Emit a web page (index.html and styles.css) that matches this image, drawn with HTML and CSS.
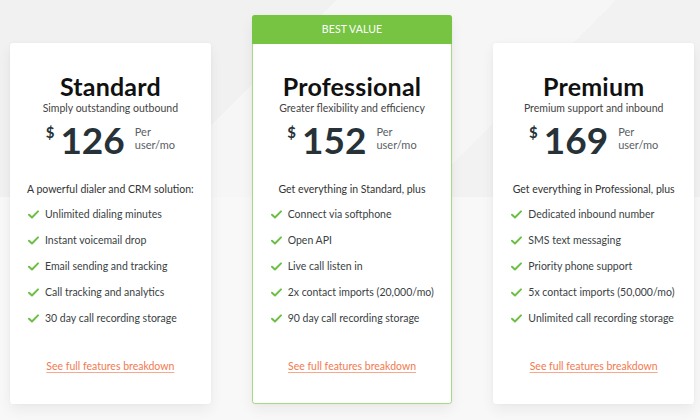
FILE: index.html
```html
<!DOCTYPE html>
<html>
<head>
<meta charset="utf-8">
<link rel="stylesheet" href="styles.css">
</head>
<body>
<div class="page">
  <div class="plans">
    <div class="card">
      <div class="body">
        <h2 class="name">Standard</h2>
        <p class="tag">Simply outstanding outbound</p>
        <div class="price"><span class="cur">$</span><span class="amt">126</span><span class="per">Per<br>user/mo</span></div>
        <p class="intro">A powerful dialer and CRM solution:</p>
        <ul class="feats">
          <li><svg viewBox="0 0 12 10"><path d="M1 5.2 4.3 8.3 11 1.5"/></svg>Unlimited dialing minutes</li>
          <li><svg viewBox="0 0 12 10"><path d="M1 5.2 4.3 8.3 11 1.5"/></svg>Instant voicemail drop</li>
          <li><svg viewBox="0 0 12 10"><path d="M1 5.2 4.3 8.3 11 1.5"/></svg>Email sending and tracking</li>
          <li><svg viewBox="0 0 12 10"><path d="M1 5.2 4.3 8.3 11 1.5"/></svg>Call tracking and analytics</li>
          <li><svg viewBox="0 0 12 10"><path d="M1 5.2 4.3 8.3 11 1.5"/></svg>30 day call recording storage</li>
        </ul>
        <a class="more" href="#">See full features breakdown</a>
      </div>
    </div>
    <div class="card best">
      <div class="badge">BEST VALUE</div>
      <div class="body">
        <h2 class="name">Professional</h2>
        <p class="tag">Greater flexibility and efficiency</p>
        <div class="price"><span class="cur">$</span><span class="amt">152</span><span class="per">Per<br>user/mo</span></div>
        <p class="intro">Get everything in Standard, plus</p>
        <ul class="feats">
          <li><svg viewBox="0 0 12 10"><path d="M1 5.2 4.3 8.3 11 1.5"/></svg>Connect via softphone</li>
          <li><svg viewBox="0 0 12 10"><path d="M1 5.2 4.3 8.3 11 1.5"/></svg>Open API</li>
          <li><svg viewBox="0 0 12 10"><path d="M1 5.2 4.3 8.3 11 1.5"/></svg>Live call listen in</li>
          <li><svg viewBox="0 0 12 10"><path d="M1 5.2 4.3 8.3 11 1.5"/></svg>2x contact imports (20,000/mo)</li>
          <li><svg viewBox="0 0 12 10"><path d="M1 5.2 4.3 8.3 11 1.5"/></svg>90 day call recording storage</li>
        </ul>
        <a class="more" href="#">See full features breakdown</a>
      </div>
    </div>
    <div class="card">
      <div class="body">
        <h2 class="name">Premium</h2>
        <p class="tag">Premium support and inbound</p>
        <div class="price"><span class="cur">$</span><span class="amt">169</span><span class="per">Per<br>user/mo</span></div>
        <p class="intro">Get everything in Professional, plus</p>
        <ul class="feats">
          <li><svg viewBox="0 0 12 10"><path d="M1 5.2 4.3 8.3 11 1.5"/></svg>Dedicated inbound number</li>
          <li><svg viewBox="0 0 12 10"><path d="M1 5.2 4.3 8.3 11 1.5"/></svg>SMS text messaging</li>
          <li><svg viewBox="0 0 12 10"><path d="M1 5.2 4.3 8.3 11 1.5"/></svg>Priority phone support</li>
          <li><svg viewBox="0 0 12 10"><path d="M1 5.2 4.3 8.3 11 1.5"/></svg>5x contact imports (50,000/mo)</li>
          <li><svg viewBox="0 0 12 10"><path d="M1 5.2 4.3 8.3 11 1.5"/></svg>Unlimited call recording storage</li>
        </ul>
        <a class="more" href="#">See full features breakdown</a>
      </div>
    </div>
  </div>
</div>
</body>
</html>
```
FILE: styles.css
```css
* { box-sizing: border-box; }
html, body { margin: 0; padding: 0; }
body {
  width: 700px;
  height: 420px;
  overflow: hidden;
  font-family: "Lato", "Liberation Sans", sans-serif;
  background:
    linear-gradient(to bottom, rgba(255,255,255,0) 0, rgba(255,255,255,0) 197px, #f8f8f8 197px, #f8f8f8 100%),
    linear-gradient(135deg, #f1f1f1 0, #f1f1f1 30%, #f6f6f6 30%, #f6f6f6 55%, #f2f2f2 55%, #f2f2f2 100%);
}
.page { padding: 15px 6px 0 10px; }
.plans {
  display: flex;
  gap: 41px;
  align-items: flex-end;
}
.card {
  width: 201px;
  height: 361px;
  background: #fff;
  border-radius: 3px;
  box-shadow: 0 6px 14px rgba(0,0,0,0.06), 0 0 3px rgba(0,0,0,0.04);
  display: flex;
  flex-direction: column;
}
.card.best {
  height: 389px;
  border: 1px solid #a6da84;
}
.badge {
  background: #76c442;
  color: #fff;
  font-size: 10.5px;
  height: 29px;
  line-height: 28px;
  text-align: center;
  margin: -1px -1px 0;
  border-radius: 3px 3px 0 0;
  letter-spacing: 0.1px;
}
.body {
  flex: 1;
  display: flex;
  flex-direction: column;
  align-items: center;
  padding-top: 29px;
}
.best .body { padding-top: 28px; }
.name {
  margin: 0;
  font-size: 25px;
  line-height: 28px;
  font-weight: 700;
  color: #111;
  letter-spacing: 0.2px;
}
.tag {
  margin: 0;
  font-size: 10.5px;
  line-height: 16px;
  color: #444;
}
.price {
  display: flex;
  align-items: flex-start;
  margin-top: 4px;
  height: 44px;
  color: #263238;
}
.cur {
  font-size: 15px;
  font-weight: 700;
  line-height: 16px;
  margin-top: 4px;
  margin-right: 6px;
}
.amt {
  font-size: 37px;
  font-weight: 700;
  line-height: 40px;
}
.per {
  font-size: 11px;
  line-height: 13px;
  color: #5a6066;
  margin-left: 10px;
  margin-top: 5px;
}
.intro {
  margin: 17px 0 0;
  font-size: 10.5px;
  line-height: 16px;
  color: #333;
}
.feats {
  list-style: none;
  margin: 4px 0 0;
  padding: 0 0 0 18px;
  align-self: stretch;
}
.feats li {
  display: flex;
  align-items: center;
  height: 26px;
  font-size: 10.5px;
  color: #3a3f44;
}
.feats svg {
  width: 11px;
  height: 9px;
  margin-right: 6px;
  fill: none;
  stroke: #6cbe45;
  stroke-width: 2.2;
  stroke-linecap: round;
  stroke-linejoin: round;
}
.more {
  margin-top: 29px;
  font-size: 10.5px;
  color: #f27a4f;
  text-decoration: underline;
  text-decoration-color: #f6a98c;
  text-underline-offset: 2px;
}
```
